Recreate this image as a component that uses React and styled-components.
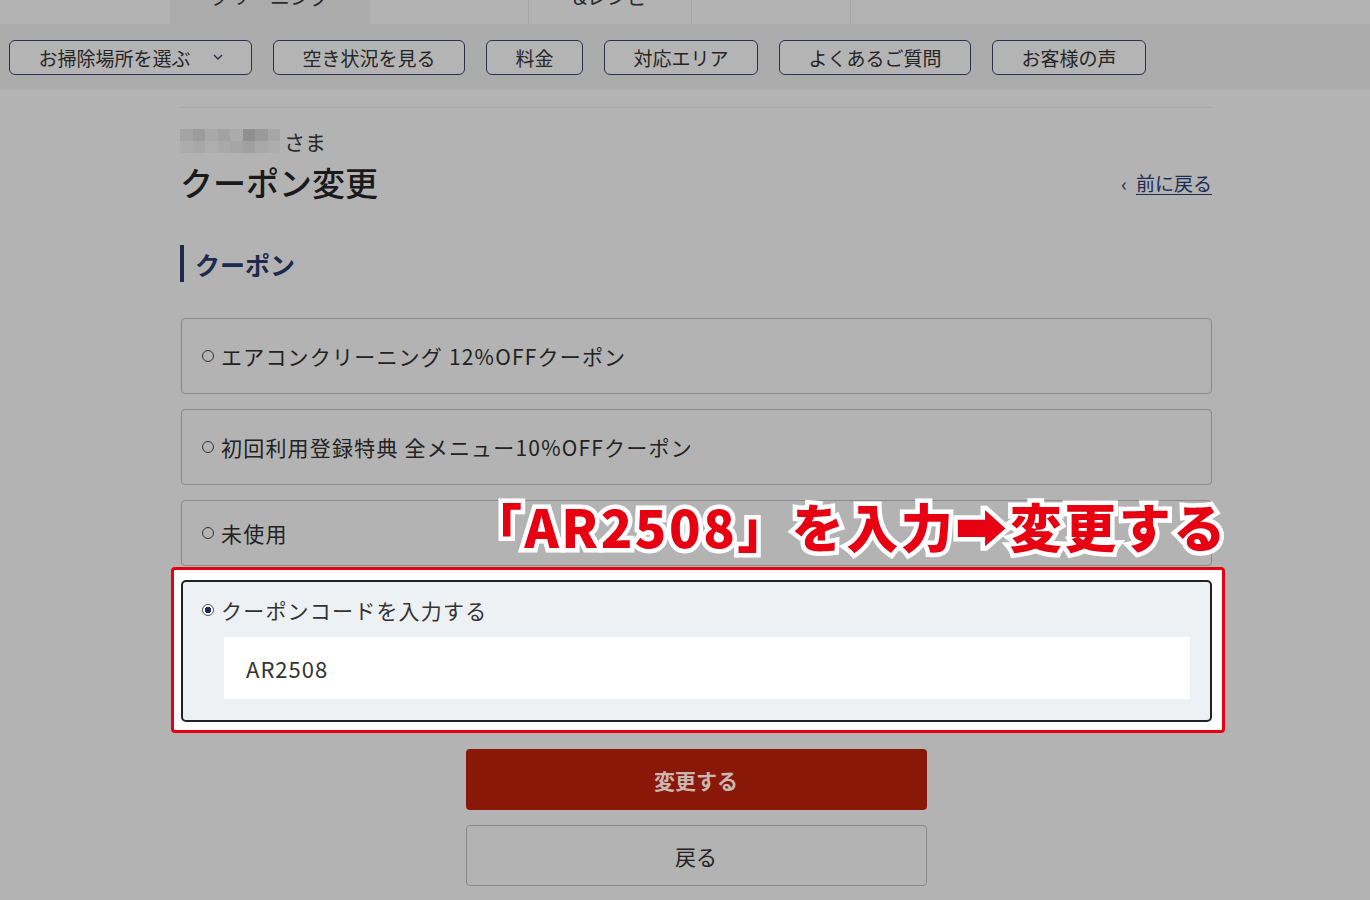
import React from "react";
import styled, { createGlobalStyle } from "styled-components";

const GlobalStyle = createGlobalStyle`
  html, body {
    margin: 0;
    padding: 0;
    background: #b3b3b3;
    font-family: "Noto Sans CJK JP", "Noto Sans", sans-serif;
    color: #1e1e1e;
  }
`;

const navItems = ["お掃除場所を選ぶ", "空き状況を見る", "料金", "対応エリア", "よくあるご質問", "お客様の声"];

const coupons = [
  { label: "エアコンクリーニング 12%OFFクーポン", tall: true },
  { label: "初回利用登録特典 全メニュー10%OFFクーポン", tall: true },
  { label: "未使用", tall: false },
];

const pixels = [
  ["#a4a4a4", "#9c9c9c", "#a9a9a9", "#a2a2a2", "#ababab", "#8f8f8f", "#9a9a9a", "#a6a6a6"],
  ["#acacac", "#a8a8a8", "#aeaeae", "#a9a9a9", "#a5a5a5", "#a0a0a0", "#a9a9a9", "#adadad"],
];

export default function App() {
  return (
    <>
      <GlobalStyle />
      <TopStrip>
        <Tab w={170} />
        <Tab w={200} active>
          <TabText>クリーニング</TabText>
        </Tab>
        <Tab w={158} />
        <Tab w={162} divider>
          <TabText>&amp;レシピ</TabText>
        </Tab>
        <Tab w={158} divider />
        <Tab w={522} divider />
      </TopStrip>

      <NavBar>
        {navItems.map((item, i) => (
          <NavButton key={item}>
            {item}
            {i === 0 && (
              <Chevron viewBox="0 0 10 6">
                <path d="M1 1l4 4 4-4" fill="none" stroke="#2a2d4a" strokeWidth="1.4" />
              </Chevron>
            )}
          </NavButton>
        ))}
      </NavBar>

      <Main>
        <NameRow>
          <Pixelated>
            {pixels.map((row, r) => (
              <PixelRow key={r}>
                {row.map((c, i) => (
                  <Pixel key={i} style={{ background: c }} />
                ))}
              </PixelRow>
            ))}
          </Pixelated>
          <span>さま</span>
        </NameRow>

        <TitleRow>
          <Title>クーポン変更</Title>
          <BackLink>
            <span>‹</span>
            <a>前に戻る</a>
          </BackLink>
        </TitleRow>

        <SectionHeading>クーポン</SectionHeading>

        <CouponList>
          {coupons.map((c) => (
            <CouponCard key={c.label} tall={c.tall}>
              <Radio />
              {c.label}
            </CouponCard>
          ))}

          <Highlight>
            <SelectedCard>
              <CouponLabel>
                <Radio checked />
                クーポンコードを入力する
              </CouponLabel>
              <CodeInput>AR2508</CodeInput>
            </SelectedCard>
          </Highlight>

          <Annotation>「AR2508」を入力➡変更する</Annotation>
        </CouponList>

        <Actions>
          <PrimaryButton>変更する</PrimaryButton>
          <SecondaryButton>戻る</SecondaryButton>
        </Actions>
      </Main>
    </>
  );
}

const TopStrip = styled.div`
  display: flex;
  height: 24px;
  background: #b3b3b3;
  overflow: hidden;
`;

const Tab = styled.div`
  width: ${(p) => p.w}px;
  flex-shrink: 0;
  height: 24px;
  display: flex;
  justify-content: center;
  background: ${(p) => (p.active ? "#ababab" : "#b3b3b3")};
  border-left: ${(p) => (p.divider ? "1px solid #a6a6a6" : "none")};
  overflow: hidden;
`;

const TabText = styled.span`
  font-size: 20px;
  line-height: 20px;
  margin-top: -13px;
  color: #2a2a2a;
`;

const NavBar = styled.nav`
  display: flex;
  gap: 21px;
  height: 66px;
  padding: 0 9px;
  align-items: center;
  background: #acacac;
  border-bottom: 1px solid #b6b6b6;
`;

const NavButton = styled.div`
  display: flex;
  align-items: center;
  gap: 22px;
  height: 33px;
  padding: 0 28.5px;
  border: 1.5px solid #2c2f4d;
  border-radius: 6px;
  background: #b4b4b4;
  font-size: 19px;
  color: #252525;
  white-space: nowrap;
`;

const Chevron = styled.svg`
  width: 10px;
  height: 6px;
`;

const Main = styled.main`
  width: 1032px;
  margin: 16px 0 0 180px;
  border-top: 1px solid #a9a9a9;
  padding-bottom: 14px;
`;

const NameRow = styled.div`
  display: flex;
  align-items: center;
  gap: 4px;
  margin-top: 20px;
  font-size: 21px;
  line-height: 26px;
  color: #2a2a2a;
`;

const Pixelated = styled.div`
  display: flex;
  flex-direction: column;
  width: 100px;
`;

const PixelRow = styled.div`
  display: flex;
`;

const Pixel = styled.span`
  width: 12.5px;
  height: 12px;
`;

const TitleRow = styled.div`
  display: flex;
  justify-content: space-between;
  align-items: center;
  margin-top: 8px;
`;

const Title = styled.h1`
  margin: 0;
  font-size: 33px;
  line-height: 40px;
  font-weight: 500;
  color: #1a1a1a;
`;

const BackLink = styled.div`
  display: flex;
  align-items: center;
  gap: 9px;
  font-size: 19px;
  color: #1d2b55;

  a {
    text-decoration: underline;
    text-underline-offset: 3px;
  }
`;

const SectionHeading = styled.h2`
  margin: 43px 0 0;
  height: 37px;
  display: flex;
  align-items: center;
  padding-left: 11px;
  border-left: 4px solid #1a2a50;
  font-size: 25px;
  font-weight: 700;
  color: #1b2a4e;
`;

const CouponList = styled.div`
  position: relative;
  display: flex;
  flex-direction: column;
  gap: 15px;
  margin-top: 36px;
  padding-left: 1px;
`;

const CouponCard = styled.div`
  display: flex;
  align-items: center;
  height: ${(p) => (p.tall ? 76 : 66)}px;
  box-sizing: border-box;
  padding: 0 20px;
  border: 1.5px solid #8a8a8a;
  border-radius: 4px;
  font-size: 21px;
  letter-spacing: 1.2px;
  color: #222;
`;

const Radio = styled.span`
  width: 12px;
  height: 12px;
  margin-right: 7px;
  box-sizing: border-box;
  border-radius: 50%;
  border: 1.5px solid ${(p) => (p.checked ? "#555" : "#333")};
  background: ${(p) => (p.checked ? "radial-gradient(circle, #1b2a5c 0 3px, #fff 3.5px)" : "transparent")};
  flex-shrink: 0;
`;

const Highlight = styled.div`
  margin: -14px -13px 0 -10px;
  padding: 10px 10px 8px 7px;
  border: 3px solid #e60012;
  border-radius: 4px;
  background: #ffffff;
`;

const SelectedCard = styled.div`
  display: flex;
  flex-direction: column;
  padding: 13px 20px 21px 19px;
  border: 2px solid #222;
  border-radius: 5px;
  background: #eef1f3;
`;

const CouponLabel = styled.div`
  display: flex;
  align-items: center;
  font-size: 21px;
  line-height: 30px;
  letter-spacing: 1.2px;
  color: #333;
`;

const CodeInput = styled.div`
  margin: 12px 0 0 22px;
  height: 62px;
  display: flex;
  align-items: center;
  padding-left: 22px;
  background: #fff;
  font-size: 22px;
  letter-spacing: 1px;
  color: #333;
`;

const Annotation = styled.div`
  position: absolute;
  left: 290px;
  top: 178px;
  font-size: 52px;
  line-height: 60px;
  font-weight: 900;
  color: #e60012;
  white-space: nowrap;
  -webkit-text-stroke: 9px #ffffff;
  paint-order: stroke fill;
  letter-spacing: 2.5px;
`;

const Actions = styled.div`
  display: flex;
  flex-direction: column;
  align-items: center;
  gap: 15px;
  margin-top: 16px;
`;

const BaseButton = styled.div`
  width: 461px;
  height: 61px;
  box-sizing: border-box;
  display: flex;
  align-items: center;
  justify-content: center;
  border-radius: 4px;
  font-size: 21px;
`;

const PrimaryButton = styled(BaseButton)`
  background: #8a1808;
  color: #c9b8b2;
  font-weight: 700;
`;

const SecondaryButton = styled(BaseButton)`
  border: 1.5px solid #888;
  color: #222;
`;
